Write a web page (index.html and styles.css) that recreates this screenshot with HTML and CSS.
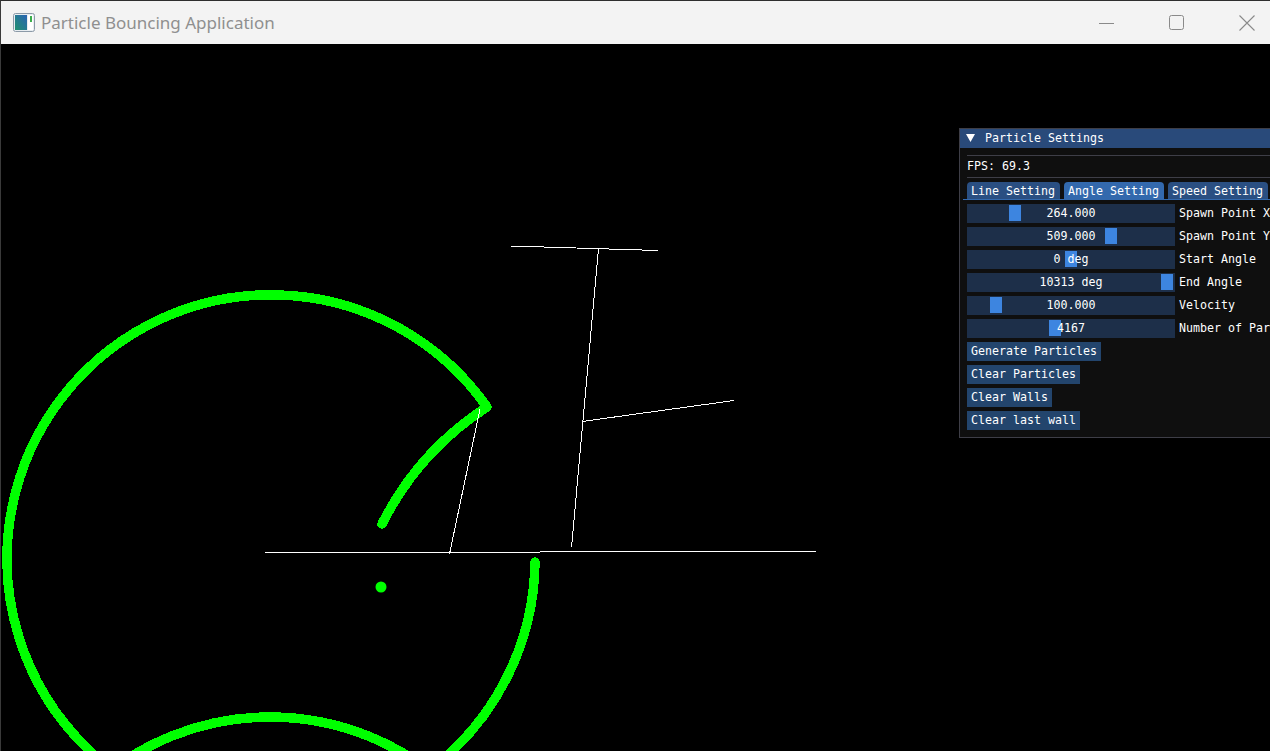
FILE: index.html
```html
<!DOCTYPE html>
<html>
<head>
<meta charset="utf-8">
<title>Particle Bouncing Application</title>
<link rel="stylesheet" href="styles.css">
</head>
<body>
<div class="window">
  <div class="titlebar">
    <svg class="app-icon" width="22" height="19" viewBox="0 0 22 19">
      <defs>
        <linearGradient id="ig" x1="0" y1="1" x2="1" y2="0">
          <stop offset="0" stop-color="#1f9070"/>
          <stop offset="1" stop-color="#2a64b4"/>
        </linearGradient>
      </defs>
      <rect x="0.5" y="0.5" width="21" height="18" rx="2" fill="#e8edf1" stroke="#8c9aa8"/>
      <rect x="2" y="2" width="12" height="15" fill="url(#ig)"/>
      <rect x="15" y="2" width="5" height="15" fill="#ffffff"/>
      <rect x="17" y="3" width="2" height="6" fill="#3cae4c"/>
    </svg>
    <span class="title">Particle Bouncing Application</span>
    <div class="controls">
      <div class="ctrl"><svg width="16" height="16" viewBox="0 0 16 16"><line x1="0" y1="8.5" x2="15" y2="8.5" stroke="#8a8a8a" stroke-width="1"/></svg></div>
      <div class="ctrl"><svg width="16" height="16" viewBox="0 0 16 16"><rect x="0.5" y="0.5" width="14" height="14" rx="2" fill="none" stroke="#8a8a8a" stroke-width="1"/></svg></div>
      <div class="ctrl"><svg width="16" height="16" viewBox="0 0 16 16"><path d="M0.5 0.5 L15.5 15.5 M15.5 0.5 L0.5 15.5" stroke="#8a8a8a" stroke-width="1.1" fill="none"/></svg></div>
    </div>
  </div>
  <div class="canvas">
    <svg class="scene" width="1281" height="707" viewBox="1 44 1281 707">
      <g fill="none" stroke="#00ff00" stroke-width="9.5" stroke-linecap="round" shape-rendering="crispEdges">
        <path d="M 535 562 A 264 264 0 1 1 487 407"/>
        <path d="M 487 407 A 300 300 0 0 0 382 524"/>
        <circle cx="270" cy="980" r="263"/>
      </g>
      <circle cx="381" cy="587" r="5.5" fill="#00ff00"/>
      <g stroke="#ffffff" stroke-width="1" shape-rendering="crispEdges">
        <line x1="511" y1="246" x2="658" y2="250.5"/>
        <line x1="598.5" y1="248.5" x2="571.5" y2="547.5"/>
        <line x1="582" y1="421.5" x2="734" y2="400.5"/>
        <line x1="480" y1="409" x2="449.5" y2="554"/>
        <line x1="265" y1="552.5" x2="540" y2="552.5"/>
        <line x1="540" y1="551.5" x2="816" y2="551.5"/>
      </g>
    </svg>

    <div class="imgui">
      <div class="ig-title">
        <svg class="ig-arrow" width="9" height="8" viewBox="0 0 9 8"><polygon points="0,0 9,0 4.5,8" fill="#ffffff"/></svg>
        <span>Particle Settings</span>
      </div>
      <div class="ig-body">
        <div class="ig-sep"></div>
        <div class="ig-text">FPS: 69.3</div>
        <div class="ig-sep"></div>
        <div class="ig-tabs">
          <div class="ig-tab">Line Setting</div>
          <div class="ig-tab active">Angle Setting</div>
          <div class="ig-tab">Speed Setting</div>
        </div>
        <div class="ig-row">
          <div class="ig-slider"><div class="ig-grab" style="left:42px"></div><span class="ig-val">264.000</span></div>
          <span class="ig-label">Spawn Point X</span>
        </div>
        <div class="ig-row">
          <div class="ig-slider"><div class="ig-grab" style="left:138px"></div><span class="ig-val">509.000</span></div>
          <span class="ig-label">Spawn Point Y</span>
        </div>
        <div class="ig-row">
          <div class="ig-slider"><div class="ig-grab" style="left:98px"></div><span class="ig-val">0 deg</span></div>
          <span class="ig-label">Start Angle</span>
        </div>
        <div class="ig-row">
          <div class="ig-slider"><div class="ig-grab" style="left:194px"></div><span class="ig-val">10313 deg</span></div>
          <span class="ig-label">End Angle</span>
        </div>
        <div class="ig-row">
          <div class="ig-slider"><div class="ig-grab" style="left:23px"></div><span class="ig-val">100.000</span></div>
          <span class="ig-label">Velocity</span>
        </div>
        <div class="ig-row">
          <div class="ig-slider"><div class="ig-grab" style="left:82px"></div><span class="ig-val">4167</span></div>
          <span class="ig-label">Number of Particles</span>
        </div>
        <div class="ig-btn">Generate Particles</div>
        <div class="ig-btn">Clear Particles</div>
        <div class="ig-btn">Clear Walls</div>
        <div class="ig-btn">Clear last wall</div>
      </div>
    </div>
  </div>
</div>
</body>
</html>
```
FILE: styles.css
```css
html, body {
  margin: 0;
  padding: 0;
  width: 1270px;
  height: 751px;
  overflow: hidden;
  background: #000;
}

.window {
  width: 1282px;
  height: 751px;
  display: flex;
  flex-direction: column;
  border-top: 1px solid #2e2e2e;
  border-left: 1px solid #3a3a3a;
  box-sizing: border-box;
  background: #000;
}

.titlebar {
  height: 43px;
  flex: 0 0 43px;
  background: #f3f3f3;
  display: flex;
  align-items: center;
}

.app-icon {
  margin-left: 12px;
  flex: 0 0 auto;
}

.title {
  margin-left: 6px;
  font-family: "Noto Sans", "Open Sans", sans-serif;
  font-size: 17px;
  color: #8f8f8f;
  margin-top: -1px;
}

.controls {
  margin-left: auto;
  display: flex;
  height: 43px;
}

.ctrl {
  width: 70px;
  height: 43px;
  display: flex;
  align-items: center;
  justify-content: center;
}

.ctrl svg {
  display: block;
}

.canvas {
  flex: 1 1 auto;
  position: relative;
  overflow: hidden;
  background: #000;
}

.scene {
  display: block;
  position: absolute;
  left: 0;
  top: 0;
}

.imgui {
  position: absolute;
  left: 958px;
  top: 84px;
  width: 380px;
  border: 1px solid #3e3e47;
  background: #0f0f0f;
  font-family: "DejaVu Sans Mono", "Liberation Mono", monospace;
  font-size: 11.63px;
  color: #ffffff;
}

.ig-title {
  height: 19px;
  background: #294a7a;
  display: flex;
  align-items: center;
  padding-left: 6px;
  gap: 10px;
  line-height: 19px;
}

.ig-arrow {
  display: block;
  margin-top: -1px;
}

.ig-body {
  padding: 7px 8px 7px 7px;
  display: flex;
  flex-direction: column;
  align-items: flex-start;
  gap: 4px;
}

.ig-sep {
  height: 1px;
  width: 100%;
  background: #3e3e47;
}

.ig-text {
  height: 13px;
  line-height: 13px;
}

.ig-tabs {
  display: flex;
  gap: 4px;
  border-bottom: 1px solid #3369ad;
  margin-left: -4px;
  padding-left: 4px;
  width: 100%;
}

.ig-tab {
  height: 17px;
  line-height: 18px;
  padding: 0 5px 0 4px;
  background: #2a4f82;
  border-radius: 4px 4px 0 0;
  white-space: nowrap;
}

.ig-tab.active {
  background: #3369ad;
}

.ig-row {
  display: flex;
  align-items: center;
  gap: 4px;
  height: 19px;
  white-space: nowrap;
}

.ig-slider {
  position: relative;
  width: 208px;
  height: 19px;
  background: #1d2f49;
  display: flex;
  align-items: center;
  justify-content: center;
}

.ig-grab {
  position: absolute;
  top: 1px;
  width: 12px;
  height: 16px;
  background: #3d85e0;
}

.ig-val {
  position: relative;
  line-height: 19px;
}

.ig-label {
  line-height: 19px;
}

.ig-btn {
  height: 19px;
  line-height: 19px;
  padding: 0 4px;
  background: #23456d;
  white-space: nowrap;
}
```
